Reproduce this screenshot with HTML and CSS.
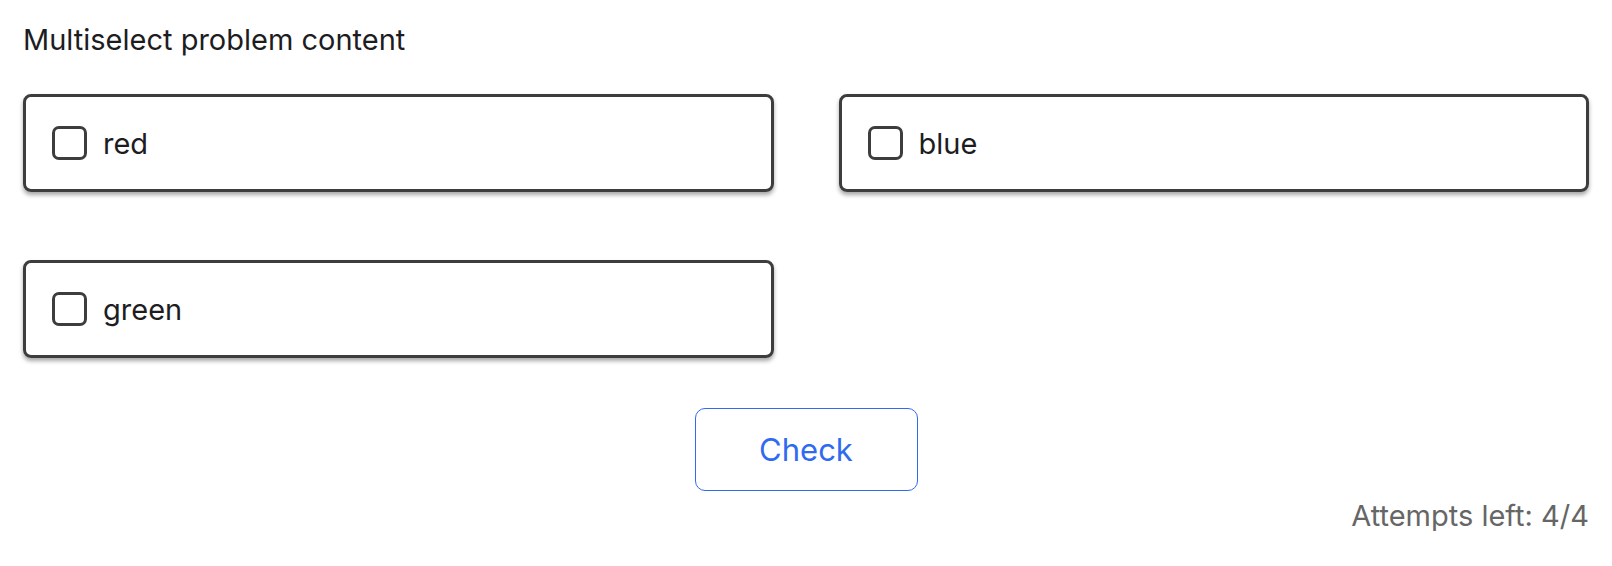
FILE: index.html
```html
<!DOCTYPE html>
<html>
<head>
<meta charset="utf-8">
<link rel="stylesheet" href="styles.css">
</head>
<body>
<div class="problem">
  <div class="title">Multiselect problem content</div>
  <div class="options">
    <label class="option"><span class="box"></span><span class="label">red</span></label>
    <label class="option"><span class="box"></span><span class="label">blue</span></label>
    <label class="option"><span class="box"></span><span class="label">green</span></label>
  </div>
  <div class="actions">
    <button class="check">Check</button>
  </div>
  <div class="attempts">Attempts left: 4/4</div>
</div>
</body>
</html>
```

FILE: styles.css
```css
html, body {
  margin: 0;
  padding: 0;
  background: #fff;
}
body {
  font-family: Inter, "Noto Sans", sans-serif;
  color: #1d1d1f;
}
.problem {
  padding: 25px 23px 0 23px;
}
.title {
  font-size: 29px;
  line-height: 30px;
}
.options {
  display: grid;
  grid-template-columns: 1fr 1fr;
  column-gap: 65px;
  row-gap: 68px;
  margin-top: 39px;
}
.option {
  display: flex;
  align-items: center;
  height: 98px;
  box-sizing: border-box;
  border: 3.5px solid #3d3d3d;
  border-radius: 8px;
  padding-left: 26px;
  box-shadow: 0 3px 4px rgba(0,0,0,0.35);
  font-size: 29px;
}
.box {
  width: 35px;
  height: 34px;
  box-sizing: border-box;
  border: 3.5px solid #3d3d3d;
  border-radius: 7px;
  margin-right: 16px;
}
.actions {
  display: flex;
  justify-content: center;
  margin-top: 50px;
}
.check {
  width: 223px;
  height: 83px;
  background: #fff;
  border: 1.5px solid #2f6bf0;
  border-radius: 10px;
  color: #2f6bf0;
  font-family: Inter, "Noto Sans", sans-serif;
  font-size: 31px;
}
.attempts {
  text-align: right;
  font-size: 29px;
  line-height: 30px;
  color: #666;
  margin-top: 10px;
}
```
